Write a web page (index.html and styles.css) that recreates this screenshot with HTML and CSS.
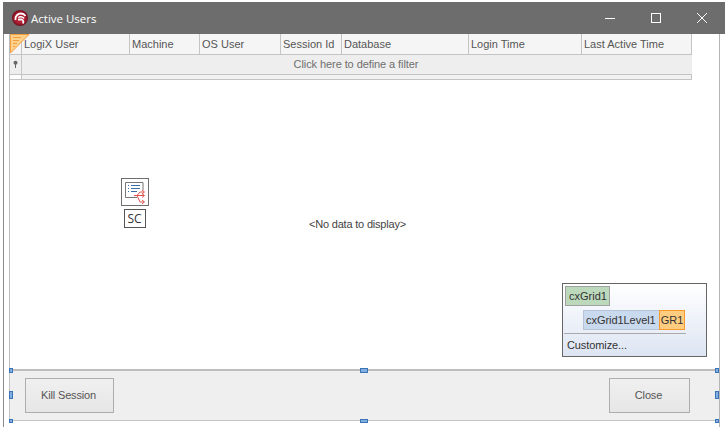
FILE: index.html
```html
<!DOCTYPE html>
<html lang="en">
<head>
    <meta charset="UTF-8">
    <title>Active Users</title>
    <link rel="stylesheet" href="styles.css">
</head>
<body>
    <div class="window">
        <div class="titlebar">
            <svg class="app-logo" width="16" height="16" viewBox="0 0 16 16">
                <defs>
                    <radialGradient id="logoFill">
                        <stop offset="0.6" stop-color="#b02033"/>
                        <stop offset="1" stop-color="#701020"/>
                    </radialGradient>
                </defs>
                <circle cx="8" cy="8" r="8" fill="url(#logoFill)"/>
                <path d="M3.500 10C2.800 6 6 3.500 9 3.500C11 3.500 12.500 4.500 13.500 6" fill="none" stroke="#fff" stroke-width="1.800"/>
                <path d="M6 9.500L9.500 9.500C11.300 10 11.800 11.500 11 13.500" fill="none" stroke="#fff" stroke-width="1.800"/>
                <path d="M12 8.500C10.500 6.300 8 6.300 6.300 7.500" fill="none" stroke="#fff" stroke-width="1.500"/>
            </svg>
            <span class="title">Active Users</span>
            <div class="win-buttons">
                <svg width="12" height="12" viewBox="0 0 12 12"><path d="M1 6.500H11" stroke="#fff"/></svg>
                <svg width="12" height="12" viewBox="0 0 12 12"><rect x="1.500" y="1.500" width="9" height="9" fill="none" stroke="#fff"/></svg>
                <svg width="12" height="12" viewBox="0 0 12 12"><path d="M1 1L11 11M11 1L1 11" stroke="#fff"/></svg>
            </div>
        </div>
        <div class="client">
            <div class="grid-area">
                <div class="grid">
                    <div class="grid-row header-row">
                        <div class="indicator">
                            <svg class="corner" width="20" height="20" viewBox="0 0 20 20">
                                <path d="M0.500 0.500H19L0.500 19Z" fill="#fdd08c" stroke="#f39f3e"/>
                                <path d="M3 3.500H11M3 6.500H9M3 9.500H7M3 12.500H5" stroke="#f39f3e"/>
                            </svg>
                        </div>
                        <div class="col col-user">LogiX User</div>
                        <div class="col col-machine">Machine</div>
                        <div class="col col-os">OS User</div>
                        <div class="col col-session">Session Id</div>
                        <div class="col col-db">Database</div>
                        <div class="col col-login">Login Time</div>
                        <div class="col col-active">Last Active Time</div>
                    </div>
                    <div class="grid-row filter-row">
                        <div class="indicator">
                            <svg width="7" height="9" viewBox="0 0 7 9">
                                <circle cx="3.500" cy="2.800" r="2" fill="#666"/>
                                <path d="M3.500 4V8" stroke="#666"/>
                            </svg>
                        </div>
                        <div class="filter-text">Click here to define a filter</div>
                    </div>
                    <div class="grid-row strip-row">
                        <div class="indicator"></div>
                        <div class="strip"></div>
                    </div>
                </div>
                <div class="no-data">&lt;No data to display&gt;</div>

                <div class="component">
                    <div class="component-icon">
                        <svg width="26" height="26" viewBox="0 0 26 26">
                            <path d="M15 18.500H3.500V3.500H21V11" fill="none" stroke="#777"/>
                            <path d="M6.500 6V7M6.500 9V10M6.500 12V13" stroke="#3a6ea5"/>
                            <path d="M9 6.500H18M9 9.500H18M9 12.500H15" stroke="#3a6ea5"/>
                            <path d="M12 16.500H22M15 16.500L18 13H22M15 16.500L18 23H22M20 11L22.500 13L20 15M20 14.500L22.500 16.500L20 18.500M20 21L22.500 23L20 25" fill="none" stroke="#e0554f"/>
                        </svg>
                    </div>
                    <div class="component-name">SC</div>
                </div>

                <div class="level-popup">
                    <div class="popup-grid">cxGrid1</div>
                    <div class="popup-level">
                        <span class="level-name">cxGrid1Level1</span><span class="level-view">GR1</span>
                    </div>
                    <div class="popup-sep"></div>
                    <div class="popup-link">Customize...</div>
                </div>
            </div>
            <div class="button-panel">
                <button class="btn btn-kill">Kill Session</button>
                <button class="btn btn-close">Close</button>
                <span class="handle h-tl"></span>
                <span class="handle h-tm"></span>
                <span class="handle h-tr"></span>
                <span class="handle h-ml"></span>
                <span class="handle h-mr"></span>
                <span class="handle h-bl"></span>
                <span class="handle h-bm"></span>
                <span class="handle h-br"></span>
            </div>
        </div>
    </div>
</body>
</html>
```

FILE: styles.css
```css
body {
    margin: 0;
    height: 427px;
    overflow: hidden;
    background: #fff;
    font-family: "Liberation Sans", Arial, sans-serif;
    font-size: 11px;
    color: #444;
}

.window {
    margin: 2px 0 0 3px;
    height: 425px;
    display: flex;
    flex-direction: column;
}

.titlebar {
    height: 32px;
    flex: none;
    background: #6d6d6d;
    display: flex;
    align-items: center;
    padding-left: 9px;
    color: #fff;
}
.app-logo {
    margin-right: 3px;
}
.title {
    font-family: "Open Sans", sans-serif;
    font-size: 11.5px;
}
.win-buttons {
    margin-left: auto;
    display: flex;
    gap: 34px;
    padding-right: 17px;
}

.client {
    flex: 1;
    display: flex;
    flex-direction: column;
    border-left: 1px solid #8c8c8c;
    border-right: 1px solid #b5b5b5;
    margin-right: 5px;
    padding-left: 5px;
    padding-bottom: 6px;
}

.grid-area {
    position: relative;
    flex: 1;
    border-left: 1px solid #bdbdbd;
}
.grid {
    width: 682px;
}
.grid-row {
    display: flex;
}
.indicator {
    width: 11px;
    flex: none;
    border-right: 1px solid #c4c4c4;
    position: relative;
    display: flex;
    align-items: center;
    justify-content: center;
}
.corner {
    position: absolute;
    left: 0;
    top: 0;
}
.header-row {
    height: 20px;
    background: #f5f5f5;
    border-bottom: 1px solid #c4c4c4;
}
.col {
    position: relative;
    line-height: 20px;
    padding-left: 2px;
    border-right: 1px solid #c4c4c4;
    box-sizing: border-box;
    white-space: nowrap;
    color: #555;
}
.col-user { width: 108px; }
.col-machine { width: 70px; }
.col-os { width: 81px; }
.col-session { width: 61px; }
.col-db { width: 127px; }
.col-login { width: 113px; }
.col-active { width: 110px; }

.filter-row {
    height: 19px;
    background: #eeeeee;
    border-bottom: 1px solid #c4c4c4;
}
.filter-text {
    flex: 1;
    text-align: center;
    line-height: 19px;
    color: #6e6e6e;
    letter-spacing: -0.08px;
    padding-right: 2px;
}
.strip-row {
    height: 4px;
    border-bottom: 1px solid #c4c4c4;
}
.strip {
    flex: 1;
    background: #f1f1f1;
    border-right: 1px solid #c4c4c4;
}

.no-data {
    position: absolute;
    left: 0;
    right: 14px;
    top: 184px;
    text-align: center;
    color: #444;
    letter-spacing: -0.2px;
}

.component {
    position: absolute;
    left: 111px;
    top: 144px;
    display: flex;
    flex-direction: column;
    align-items: center;
    gap: 3px;
}
.component-icon {
    width: 26px;
    height: 26px;
    border: 1px solid #6e6e6e;
    display: flex;
}
.component-name {
    width: 20px;
    height: 17px;
    line-height: 17px;
    border: 1px solid #555;
    text-align: center;
    color: #333;
    font-family: "Open Sans", sans-serif;
    font-size: 12px;
    margin-right: 1px;
}

.level-popup {
    position: absolute;
    left: 552px;
    top: 249px;
    width: 143px;
    height: 72px;
    border: 1px solid #666;
    background: linear-gradient(#fff, #dde5f3);
    color: #333;
}
.popup-grid {
    position: absolute;
    left: 2px;
    top: 2px;
    width: 40px;
    height: 18px;
    line-height: 18px;
    padding-left: 3px;
    background: #bcd9bc;
    border: 1px solid #a0a0a0;
}
.popup-level {
    position: absolute;
    left: 20px;
    top: 26px;
    display: flex;
}
.level-name {
    width: 73px;
    height: 18px;
    line-height: 18px;
    padding-left: 2px;
    background: #c9d9ee;
    border: 1px solid #b7c4d8;
    border-right: none;
    letter-spacing: -0.05px;
}
.level-view {
    width: 24px;
    height: 18px;
    line-height: 18px;
    text-align: center;
    background: #ffcc80;
    border: 1px solid #f59b2e;
}
.popup-sep {
    position: absolute;
    left: 1px;
    top: 49px;
    width: 122px;
    border-top: 1px solid #aaa;
}
.popup-link {
    position: absolute;
    left: 4px;
    top: 55px;
    letter-spacing: -0.1px;
}

.button-panel {
    position: relative;
    height: 49px;
    flex: none;
    background: #efefef;
    border-top: 2px solid #bdbdbd;
    border-bottom: 1px solid #c4c4c4;
    border-left: 1px solid #c4c4c4;
    display: flex;
    justify-content: space-between;
    align-items: center;
    padding: 0 29px 0 15px;
}
.btn {
    height: 35px;
    border: 1px solid #adadad;
    background: linear-gradient(#f0f0f0, #e6e6e6);
    font-family: "Liberation Sans", Arial, sans-serif;
    font-size: 11px;
    color: #555;
    padding: 0 2px 2px 0;
    letter-spacing: -0.15px;
}
.btn-kill { width: 89px; }
.btn-close { width: 81px; }

.handle {
    position: absolute;
    background: #82aee0;
    border: 1px solid #3a74b8;
    box-sizing: border-box;
}
.h-tl, .h-tm, .h-tr {
    top: -3px;
    height: 5px;
}
.h-bl, .h-bm, .h-br {
    bottom: -3px;
    height: 4px;
}
.h-ml, .h-mr {
    top: 20px;
    height: 8px;
}
.h-tl, .h-ml, .h-bl {
    left: -1px;
    width: 4px;
}
.h-tr, .h-mr, .h-br {
    right: 0;
    width: 4px;
}
.h-tm, .h-bm {
    left: 350px;
    width: 8px;
}
```
